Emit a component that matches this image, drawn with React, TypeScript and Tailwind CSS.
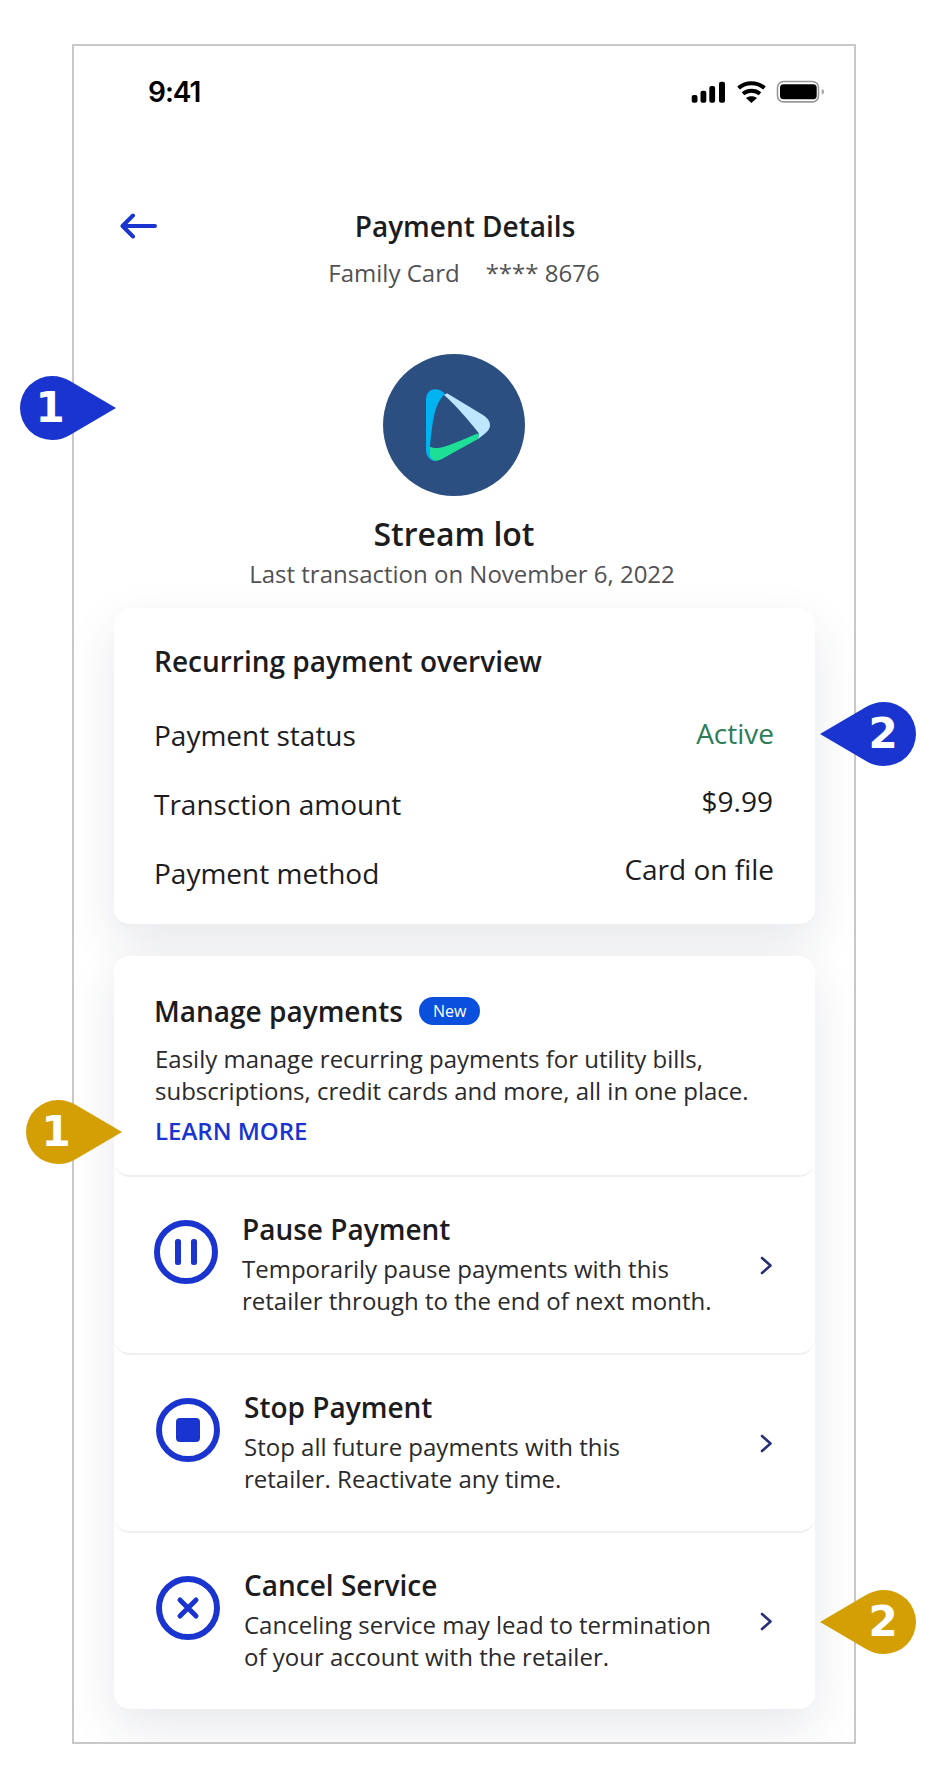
const BLUE = "#1a35cf";

function Pin({ dir, color, n, className }: { dir: "r" | "l"; color: string; n: string; className: string }) {
  return (
    <div className={`absolute w-[96px] h-[64px] ${className}`}>
      <svg width="96" height="64" viewBox="0 0 96 64" className="absolute inset-0">
        <path
          transform={dir === "l" ? "matrix(-1 0 0 1 96 0)" : undefined}
          d="M32 0A32 32 0 0 0 32 64C39 64 45 62 50 59L96 32L50 5C45 2 39 0 32 0Z"
          fill={color}
        />
      </svg>
      <span
        className={`absolute top-0 h-[64px] w-[64px] flex items-center justify-center font-['DejaVu_Sans'] font-bold text-[42px] leading-none text-white ${dir === "r" ? "-left-[2px]" : "right-[1px]"}`}
      >
        {n}
      </span>
    </div>
  );
}

function Chevron() {
  return (
    <svg width="13" height="19" viewBox="0 0 13 19" fill="none" className="shrink-0">
      <path d="M2 2L10.5 9.5L2 17" stroke="#2a2e78" strokeWidth="2.6" strokeLinecap="round" strokeLinejoin="round" />
    </svg>
  );
}

function Row({ icon, title, lines, last, tx }: { icon: React.ReactNode; title: string; lines: string[]; last?: boolean; tx: string }) {
  return (
    <div className={`flex items-center rounded-b-2xl bg-white pr-[42px] ${last ? "h-[176px]" : "h-[178px] border-b-2 border-[#eeeff1]"} ${tx}`}>
      {icon}
      <div className="flex-1 -mt-[4px]">
        <div className="text-[28px] leading-[40px] font-semibold text-[#1c1c1e] mb-[4px]">{title}</div>
        {lines.map((l) => (
          <div key={l} className="text-[24px] leading-[32px] text-[#2a2a2c]">{l}</div>
        ))}
      </div>
      <Chevron />
    </div>
  );
}

function Circle({ children }: { children: React.ReactNode }) {
  return (
    <svg width="64" height="64" viewBox="0 0 64 64" fill="none" className="shrink-0">
      <circle cx="32" cy="32" r="29" stroke={BLUE} strokeWidth="6" />
      {children}
    </svg>
  );
}

function Info({ label, value, green, cls, vcls }: { label: string; value: string; green?: boolean; cls: string; vcls: string }) {
  return (
    <div className={`flex justify-between ${cls}`}>
      <span className="text-[28px] leading-[36px] text-[#1c1c1e]">{label}</span>
      <span className={`text-[28px] leading-[36px] ${vcls} ${green ? "text-[#2e7d57]" : "text-[#1c1c1e]"}`}>{value}</span>
    </div>
  );
}

export default function App() {
  return (
    <div className="relative w-[936px] h-[1788px] bg-white font-['Open_Sans',sans-serif] overflow-hidden">
      <div className="absolute left-[72px] top-[44px] w-[784px] h-[1700px] border-2 border-[#c8c8c8] bg-white overflow-hidden">
        <div className="flex items-center justify-between h-[48px] mt-[22px] pl-[74px] pr-[30px]">
          <span className="font-['Inter'] font-semibold text-[28px] leading-none tracking-[-1px] text-black">9:41</span>
          <svg width="134.5" height="26" viewBox="0 0 134.5 26" fill="none">
            <rect x="1.7" y="16" width="5.8" height="7.7" rx="2" fill="#000" />
            <rect x="10.5" y="11.7" width="5.8" height="12" rx="2" fill="#000" />
            <rect x="19.3" y="7" width="5.8" height="16.7" rx="2" fill="#000" />
            <rect x="29" y="2.7" width="6" height="21" rx="2" fill="#000" />
            <path d="M48.5 9C56 2.6 67 2.6 74.5 9" stroke="#000" strokeWidth="4" />
            <path d="M53 14.8C58 10.8 65 10.8 70 14.8" stroke="#000" strokeWidth="4" />
            <path d="M56 19L61.4 24L67 19C64 16.8 59 16.8 56 19Z" fill="#000" />
            <rect x="87.5" y="2.5" width="41" height="20.4" rx="6" stroke="#999" strokeWidth="1.6" />
            <rect x="90" y="5.3" width="36.7" height="15" rx="3.5" fill="#000" />
            <path d="M131.7 10C133.5 10.5 134.3 11.5 134.3 12.7C134.3 14 133.5 15 131.7 15.5Z" fill="#aaa" />
          </svg>
        </div>

        <div className="relative h-[40px] mt-[90px] flex items-center justify-center pl-[2px]">
          <svg width="40" height="28" viewBox="0 0 40 28" fill="none" className="absolute left-[46px] top-[6px]">
            <path d="M35 14H3M13 3.5L2.5 14L13 24.5" stroke={BLUE} strokeWidth="4" strokeLinecap="round" strokeLinejoin="round" />
          </svg>
          <span className="text-[28px] leading-[36px] font-semibold text-[#1c1c1e]">Payment Details</span>
        </div>
        <div className="mt-[9px] h-[36px] flex justify-center gap-[26px] text-[24px] leading-[36px] text-[#515154]">
          <span>Family Card</span>
          <span>**** 8676</span>
        </div>

        <div className="flex justify-center mt-[63px] pr-[20px]">
          <svg width="142" height="142" viewBox="0 0 142 142" className="block">
            <circle cx="71" cy="71" r="71" fill="#2c4f82" />
            <path d="M62 40C58 36 55 35.3 52 35.3C46 35.3 43 40 43 46L43 96C43 102 47 107 53 107C48 100 47 96 47 92.7C49 75 50 50 62 40Z" fill="#00b2f0" />
            <path d="M61 41L64 39.3L100 61C105 64 107 68 107 71C107 75 104 78 102 79.5L95 85L96 79.3C91 73 73 51 61 41Z" fill="#bde7ff" />
            <path d="M47 92.7C50 94 53 94.3 57 93.7C67 92 85 83 96 79.3L95 85L62 103.3C58 106 55 107 52 106.7C49 106 47 103 47 101Z" fill="#1ddf95" />
          </svg>
        </div>

        <div className="mt-[17px] pr-[20px] text-center text-[32px] leading-[42px] font-semibold text-[#1c1c1e]">Stream lot</div>
        <div className="mt-[1px] pr-[4px] text-center text-[24px] leading-[36px] text-[#515154]">Last transaction on November 6, 2022</div>

        <div className="ml-[40px] w-[701px]">
          <div className="mt-[16px] h-[318px] rounded-2xl bg-white border-b-2 border-[#eeeff1] shadow-[0_18px_48px_rgba(40,50,80,0.11)] pl-[40px] pr-[41px] pt-[35px]">
            <div className="text-[28px] leading-[36px] font-semibold text-[#1c1c1e]">Recurring payment overview</div>
            <Info cls="mt-[38px]" vcls="-mt-[2px]" label="Payment status" value="Active" green />
            <Info cls="mt-[33px]" vcls="-mt-[3px] mr-[1px]" label="Transction amount" value="$9.99" />
            <Info cls="mt-[33px]" vcls="-mt-[4px]" label="Payment method" value="Card on file" />
          </div>

          <div className="mt-[30px] h-[753px] rounded-2xl bg-white shadow-[0_18px_48px_rgba(40,50,80,0.11)]">
            <div className="h-[221px] rounded-2xl bg-white border-b-2 border-[#eeeff1] pl-[41px] pt-[35px]">
              <div className="flex items-center gap-[16px] h-[40px] -ml-[1px]">
                <span className="text-[28px] leading-[40px] font-semibold text-[#1c1c1e]">Manage payments</span>
                <span className="h-[28px] px-[14px] rounded-full bg-[#0a50dc] text-white text-[16px] leading-[28px]">New</span>
              </div>
              <div className="mt-[12px] text-[24px] leading-[32px] text-[#2a2a2c]">
                <div>Easily manage recurring payments for utility bills,</div>
                <div>subscriptions, credit cards and more, all in one place.</div>
              </div>
              <div className="mt-[8px] text-[24px] leading-[32px] font-semibold text-[#1a35cf]">LEARN MORE</div>
            </div>
            <Row
              tx="pl-[40px]"
              title="Pause Payment"
              lines={["Temporarily pause payments with this", "retailer through to the end of next month."]}
              icon={
                <div className="w-[88px] mb-[26px]">
                  <Circle>
                    <rect x="21" y="19" width="6" height="26" rx="2.5" fill={BLUE} />
                    <rect x="37" y="19" width="6" height="26" rx="2.5" fill={BLUE} />
                  </Circle>
                </div>
              }
            />
            <Row
              tx="pl-[42px]"
              title="Stop Payment"
              lines={["Stop all future payments with this", "retailer. Reactivate any time."]}
              icon={
                <div className="w-[88px] mb-[26px]">
                  <Circle>
                    <rect x="20" y="20" width="24" height="24" rx="4" fill={BLUE} />
                  </Circle>
                </div>
              }
            />
            <Row
              last
              tx="pl-[42px]"
              title="Cancel Service"
              lines={["Canceling service may lead to termination", "of your account with the retailer."]}
              icon={
                <div className="w-[88px] mb-[26px]">
                  <Circle>
                    <path d="M24 24L40 40M40 24L24 40" stroke={BLUE} strokeWidth="5" strokeLinecap="round" />
                  </Circle>
                </div>
              }
            />
          </div>
        </div>
      </div>

      <Pin dir="r" color={BLUE} n="1" className="left-[20px] top-[376px]" />
      <Pin dir="l" color={BLUE} n="2" className="left-[820px] top-[702px]" />
      <Pin dir="r" color="#d49f05" n="1" className="left-[26px] top-[1100px]" />
      <Pin dir="l" color="#d49f05" n="2" className="left-[820px] top-[1590px]" />
    </div>
  );
}
